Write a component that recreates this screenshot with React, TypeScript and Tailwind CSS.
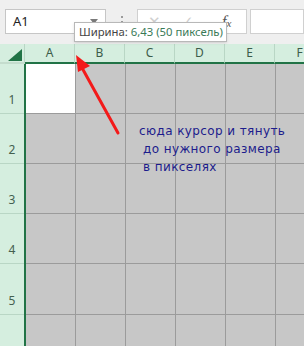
import React from 'react';

const cols = ['A', 'B', 'C', 'D', 'E', 'F'];
const rows = [
  { n: '1', h: 'h-[50px]' },
  { n: '2', h: 'h-[50px]' },
  { n: '3', h: 'h-[50px]' },
  { n: '4', h: 'h-[50px]' },
  { n: '5', h: 'h-[51px]' },
  { n: '', h: 'h-[40px]' },
];

export default function App() {
  return (
    <div className="relative w-[304px] h-[346px] overflow-hidden bg-[#efefef] font-['Noto_Sans',sans-serif]">
      {/* formula bar */}
      <div className="flex items-start h-[44px] pt-[9px] pl-[5px]">
        <div className="relative shrink-0 flex items-center w-[101px] h-[25px] bg-white border border-[#c6c6c6] pl-[7px] text-[13px] text-[#222]">
          A1
          <span className="absolute right-[7px] top-[9px] w-0 h-0 border-l-[4px] border-r-[4px] border-t-[5px] border-l-transparent border-r-transparent border-t-[#7a7a7a]" />
        </div>
        <div className="shrink-0 flex flex-col items-center gap-[3px] w-[31px] pt-[7px]">
          <span className="w-[2px] h-[2px] bg-[#9a9a9a]" />
          <span className="w-[2px] h-[2px] bg-[#9a9a9a]" />
          <span className="w-[2px] h-[2px] bg-[#9a9a9a]" />
        </div>
        <div className="shrink-0 flex items-center w-[110px] h-[25px] bg-white border border-[#d0d0d0] text-[#cfcfcf]">
          <span className="ml-[10px] text-[15px]">✕</span>
          <span className="ml-[20px] text-[15px]">✓</span>
          <span className="ml-[28px] text-[16px] text-[#555] italic font-['Liberation_Serif',serif]">
            f<span className="text-[11px]">x</span>
          </span>
        </div>
        <div className="ml-[3px] flex-1 h-[25px] bg-white border border-[#d0d0d0]" />
      </div>

      {/* column headers */}
      <div className="flex h-[20px] bg-[#d5eedf]">
        <div className="relative w-[25px] shrink-0 border-r border-b-2 border-r-[#b9d6c5] border-b-[#c4dccd]">
          <svg className="absolute right-[2px] bottom-[1px]" width="14" height="12" viewBox="0 0 14 12">
            <polygon points="14,0 14,12 0,12" fill="#217346" />
          </svg>
        </div>
        {cols.map((c) => (
          <div
            key={c}
            className="w-[50px] shrink-0 flex items-center justify-center border-r border-b-2 border-r-[#b9d6c5] border-b-[#217346] text-[12px] text-[#3c5c4a]"
          >
            {c}
          </div>
        ))}
      </div>

      {/* grid */}
      <div className="flex flex-col">
        {rows.map((r, i) => (
          <div key={i} className={`flex ${r.h}`}>
            <div className="w-[24px] shrink-0 flex items-end justify-center pb-[4px] bg-[#d5eedf] border-b border-[#b9d6c5] text-[12px] text-[#44604f]">
              {r.n}
            </div>
            <div className="w-[2px] shrink-0 bg-[#217346]" />
            {cols.map((c) => (
              <div
                key={c}
                className={`w-[50px] shrink-0 border-r border-b border-[#9b9b9b] ${i === 0 && c === 'A' ? 'bg-white' : 'bg-[#c7c7c7]'}`}
              />
            ))}
          </div>
        ))}
      </div>

      {/* tooltip */}
      <div className="absolute left-[74px] top-[22px] w-[153px] h-[20px] pl-[4px] flex items-center bg-white border border-[#b8b8b8] shadow-sm text-[11.3px] whitespace-nowrap">
        <span className="text-[#444]">Ширина:&nbsp;</span>
        <span className="text-[#3a7a57]">6,43 (50 пиксель)</span>
      </div>

      {/* arrow */}
      <svg className="absolute left-0 top-0" width="304" height="346" viewBox="0 0 304 346">
        <line x1="118" y1="133" x2="81" y2="66" stroke="#f31a1a" strokeWidth="3" strokeLinecap="round" />
        <polygon points="76,55 90,66 78,72" fill="#f31a1a" />
      </svg>

      {/* annotation */}
      <div className="absolute left-[139px] top-[122px] text-[12px] leading-[18px] tracking-[0.4px] text-[#1c1c8c] font-['DejaVu_Sans',sans-serif] whitespace-nowrap">
        <div>сюда курсор и тянуть</div>
        <div className="pl-[4px]">до нужного размера</div>
        <div className="pl-[4px]">в пикселях</div>
      </div>
    </div>
  );
}
